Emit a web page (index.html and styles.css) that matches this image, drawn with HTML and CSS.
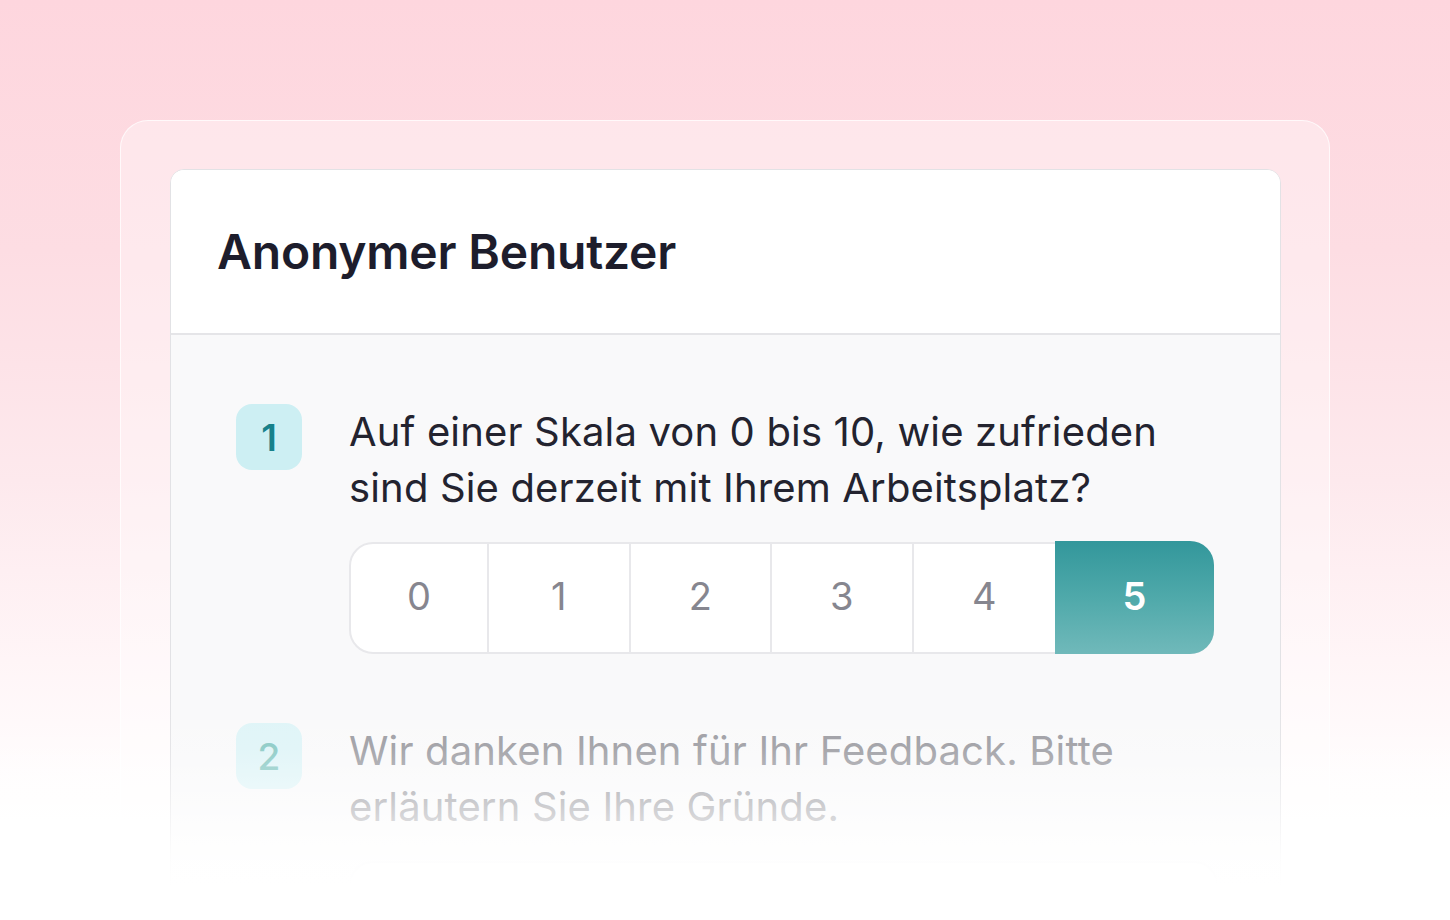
FILE: index.html
```html
<!DOCTYPE html>
<html lang="de">
<head>
<meta charset="utf-8">
<title>Umfrage</title>
<link rel="stylesheet" href="styles.css">
</head>
<body>
<div class="frame">
  <div class="card">
    <div class="card-header">
      <h1 class="title">Anonymer Benutzer</h1>
    </div>
    <div class="card-body">
      <div class="question">
        <div class="badge">1</div>
        <div class="q-main">
          <p class="q-text">Auf einer Skala von 0 bis 10, wie zufrieden sind Sie derzeit mit Ihrem Arbeitsplatz?</p>
          <div class="scale">
            <div class="cell">0</div>
            <div class="cell">1</div>
            <div class="cell">2</div>
            <div class="cell">3</div>
            <div class="cell">4</div>
            <div class="cell selected">5</div>
          </div>
        </div>
      </div>
      <div class="question second">
        <div class="badge">2</div>
        <div class="q-main">
          <p class="q-text">Wir danken Ihnen für Ihr Feedback. Bitte erläutern Sie Ihre Gründe.</p>
          <div class="input-box"></div>
        </div>
      </div>
    </div>
  </div>
</div>
<div class="fade"></div>
</body>
</html>
```
FILE: styles.css
```css
html, body {
  margin: 0;
  padding: 0;
}
body {
  width: 1450px;
  height: 920px;
  overflow: hidden;
  position: relative;
  font-family: Inter, "Noto Sans", sans-serif;
  background: linear-gradient(180deg, #fed6de 0px, #fddde3 250px, #fde9ed 480px, #fff5f7 660px, #ffffff 820px);
}
.frame {
  margin: 120px 120px 0 120px;
  padding: 48px 48px 0 49px;
  height: 900px;
  box-sizing: border-box;
  border: 1px solid rgba(255, 255, 255, 0.75);
  border-bottom: none;
  border-radius: 28px 28px 0 0;
  background: rgba(255, 255, 255, 0.35);
}
.card {
  border: 1px solid #e2e2e5;
  border-radius: 14px;
  background: #ffffff;
  overflow: hidden;
  height: 760px;
}
.card-header {
  height: 163px;
  display: flex;
  align-items: center;
  padding-left: 46px;
  border-bottom: 2px solid #e5e5e8;
  background: #ffffff;
}
.title {
  margin: 0;
  font-size: 48px;
  font-weight: 600;
  color: #1d1d2c;
  letter-spacing: -0.2px;
}
.card-body {
  background: #f9f9fa;
  padding: 69px 0 0 65px;
  height: 100%;
}
.question {
  display: grid;
  grid-template-columns: 66px 1fr;
  column-gap: 47px;
}
.badge {
  width: 66px;
  height: 66px;
  border-radius: 16px;
  background: #cdeff3;
  color: #17818a;
  font-size: 37px;
  font-weight: 600;
  display: flex;
  align-items: center;
  justify-content: center;
}
.q-text {
  margin: 0;
  font-size: 40px;
  line-height: 56px;
  letter-spacing: 0.15px;
  color: #23232f;
  max-width: 850px;
}
.scale {
  margin-top: 26px;
  width: 865px;
  height: 112px;
  box-sizing: border-box;
  display: flex;
  border: 2px solid #e8e8eb;
  border-radius: 24px;
  background: #ffffff;
}
.cell {
  flex: 0 0 141.5px;
  box-sizing: border-box;
  border-right: 2px solid #e8e8eb;
  display: flex;
  align-items: center;
  justify-content: center;
  font-size: 38px;
  color: #86868f;
  padding-bottom: 4px;
}
.cell:first-child {
  flex-basis: 138px;
}
.cell:nth-child(5) {
  border-right: none;
}
.cell.selected {
  flex: 1 1 auto;
  margin: -3px -2px -2px 0;
  border-right: none;
  border-radius: 0 24px 24px 0;
  background: linear-gradient(180deg, #33979b 0%, #4fa9aa 50%, #70b9ba 100%);
  color: #ffffff;
  font-weight: 600;
}
.second {
  margin-top: 69px;
}
.second .badge {
  background: #def4f7;
  color: #86c8c3;
  font-weight: 500;
}
.second .q-text {
  color: #9a9aa0;
}
.input-box {
  margin-top: 26px;
  width: 865px;
  height: 112px;
  border: 2px solid #ececef;
  border-radius: 24px;
  background: #ffffff;
}
.fade {
  position: absolute;
  left: 0;
  right: 0;
  top: 690px;
  height: 230px;
  background: linear-gradient(180deg, rgba(255,255,255,0) 0%, rgba(255,255,255,0.12) 25%, rgba(255,255,255,0.5) 50%, rgba(255,255,255,0.9) 72%, #ffffff 85%);
  pointer-events: none;
}
```
